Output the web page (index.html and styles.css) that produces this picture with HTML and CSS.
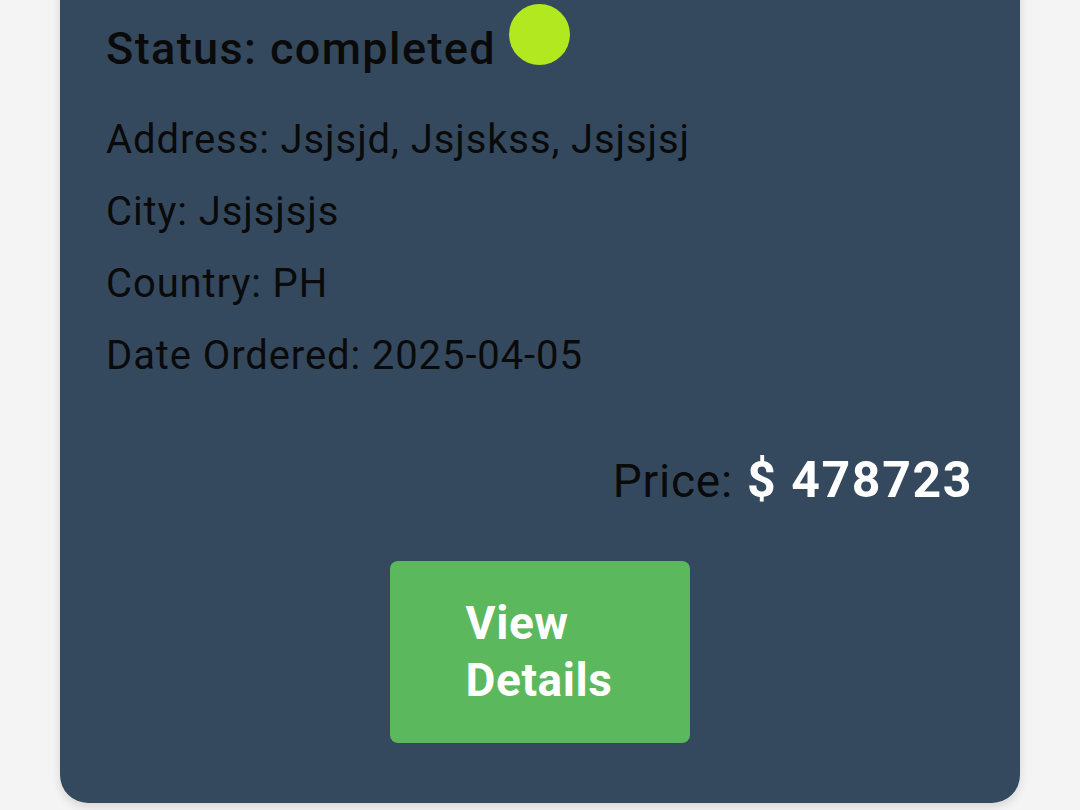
FILE: index.html
```html
<!DOCTYPE html>
<html lang="en">
<head>
<meta charset="utf-8">
<title>Order</title>
<link rel="stylesheet" href="styles.css">
</head>
<body>
<div class="page">
  <div class="card">
    <div class="status-row">
      <h2 class="status">Status: completed</h2>
      <span class="dot"></span>
    </div>
    <div class="details">
      <p>Address: Jsjsjd, Jsjskss, Jsjsjsj</p>
      <p>City: Jsjsjsjs</p>
      <p>Country: PH</p>
      <p>Date Ordered: 2025-04-05</p>
    </div>
    <div class="price-row">
      <span class="price-label">Price:</span>
      <span class="price-value">$ 478723</span>
    </div>
    <div class="actions">
      <button class="btn">View Details</button>
    </div>
  </div>
</div>
</body>
</html>
```

FILE: styles.css
```css
html, body {
  margin: 0;
  padding: 0;
  background: #f4f4f4;
  font-family: Roboto, "Liberation Sans", sans-serif;
  color: #000;
}

.page {
  padding: 0 60px;
  height: 810px;
  overflow: hidden;
}

.card {
  margin-top: -40px;
  padding: 40px 47px 60px 46px;
  background: #34495e;
  border-radius: 28px;
  box-shadow: 0 4px 10px rgba(0, 0, 0, 0.12);
}

.status-row {
  display: flex;
  align-items: flex-start;
  padding-top: 4px;
}

.status {
  margin: 20px 0 0;
  font-size: 45px;
  font-weight: 500;
  letter-spacing: 1.4px;
  line-height: 50px;
  color: #0a0a0a;
}

.dot {
  width: 61px;
  height: 61px;
  border-radius: 50%;
  background: #b2e81f;
  margin-left: 13px;
  flex: none;
}

.details {
  margin-top: 30px;
}

.details p {
  margin: 0;
  font-size: 40px;
  letter-spacing: 0.9px;
  line-height: 72px;
  color: #0a0a0a;
}

.price-row {
  margin-top: 58px;
  display: flex;
  justify-content: flex-end;
  align-items: baseline;
  gap: 14px;
  line-height: 60px;
}

.price-label {
  font-size: 46px;
  letter-spacing: 0.8px;
  color: #0a0a0a;
}

.price-value {
  font-size: 50px;
  font-weight: 700;
  letter-spacing: 1.6px;
  color: #ffffff;
}

.actions {
  margin-top: 50px;
  display: flex;
  justify-content: center;
}

.btn {
  width: 300px;
  height: 182px;
  padding: 0 0 0 76px;
  border: none;
  border-radius: 8px;
  background: #5cb85c;
  color: #ffffff;
  font-family: Roboto, "Liberation Sans", sans-serif;
  font-size: 46px;
  font-weight: 700;
  letter-spacing: 0.6px;
  line-height: 57px;
  text-align: left;
  box-sizing: border-box;
}
```
